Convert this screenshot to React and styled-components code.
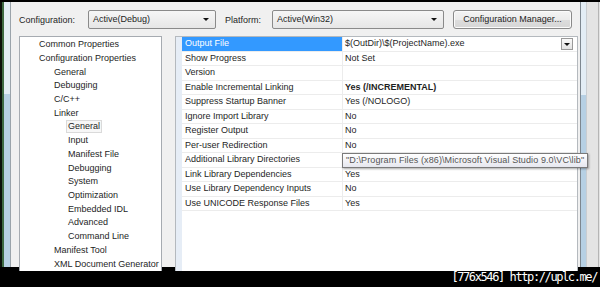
import React from "react";
import styled, { createGlobalStyle } from "styled-components";

const GlobalStyle = createGlobalStyle`
  html, body { margin: 0; padding: 0; background: #000; }
  body { font-family: "Liberation Sans", Arial, sans-serif; }
  * { box-sizing: border-box; }
`;

const Screen = styled.div`
  width: 600px;
  height: 287px;
  overflow: hidden;
  display: flex;
  flex-direction: column;
  background: #000;
`;

const Middle = styled.div`
  display: flex;
  height: 265px;
  margin-top: 2px;
  position: relative;
`;

const LeftEdge = styled.div`
  width: 11px;
  flex-shrink: 0;
  background:
    linear-gradient(to right, #0b110b 0 2px, #3d6a43 2px 4px, transparent 4px 10px, #9aa3aa 10px 11px),
    linear-gradient(to bottom, #e2edf5 0 92px, #b7d1e4 92px);
`;

const RightEdge = styled.div`
  width: 20px;
  flex-shrink: 0;
  background:
    linear-gradient(to right, #7d8790 0 1px, transparent 1px 6px, #c9cdd1 6px 7px, #e4e4e4 7px 18px, #b5b5b5 18px 19px, #e4e4e4 19px),
    linear-gradient(to bottom, #e3edf5 0 93px, #b6d0e4 93px);
`;

const Dialog = styled.div`
  flex: 1;
  background: #f0f0f0;
  padding: 8px 2px 0 8px;
  display: flex;
  flex-direction: column;
  gap: 7px;
  color: #1e1e1e;
  font-size: 9px;
`;

const Toolbar = styled.div`
  display: flex;
  align-items: center;
  height: 19px;
`;

const Label = styled.span`
  width: ${(p) => p.$w}px;
  margin-left: ${(p) => p.$ml || 0}px;
  flex-shrink: 0;
  white-space: nowrap;
`;

const Select = styled.div`
  position: relative;
  width: ${(p) => p.$w}px;
  height: 19px;
  flex-shrink: 0;
  border: 1px solid #8a8a8a;
  border-radius: 2px;
  background: linear-gradient(#f6f6f6, #e6e6e6);
  padding-left: 4px;
  line-height: 16px;
  &::after {
    content: "";
    position: absolute;
    right: 6px;
    top: 7px;
    border-left: 3px solid transparent;
    border-right: 3px solid transparent;
    border-top: 3px solid #111;
  }
`;

const Button = styled.div`
  width: 119px;
  height: 19px;
  margin-left: 9px;
  flex-shrink: 0;
  border: 1px solid #8a8a8a;
  border-radius: 3px;
  background: linear-gradient(#f4f4f4 0%, #ebebeb 50%, #dddddd 51%, #d6d6d6 100%);
  box-shadow: inset 0 0 0 1px #fbfbfb;
  text-align: center;
  line-height: 17px;
`;

const Content = styled.div`
  flex: 1;
  display: flex;
  gap: 13px;
`;

const Tree = styled.div`
  width: 143px;
  flex-shrink: 0;
  background: #fff;
  border: 1px solid #a6abb1;
  border-bottom: none;
  padding-top: 1px;
`;

const TreeRow = styled.div`
  height: 13.73px;
  line-height: 13.73px;
  padding-left: ${(p) => [17, 32, 46][p.$level]}px;
  white-space: nowrap;
`;

const TreeText = styled.span`
  display: inline-block;
  height: 13px;
  line-height: 11px;
  padding: 0 1px;
  border: 1px solid ${(p) => (p.$sel ? "#dadada" : "transparent")};
  background: ${(p) => (p.$sel ? "#f7f7f7" : "transparent")};
  vertical-align: middle;
`;

const Grid = styled.div`
  position: relative;
  flex: 1;
  display: flex;
  background: #fff;
  border: 1px solid #b4b9be;
  border-bottom: none;
`;

const Gutter = styled.div`
  width: 6px;
  flex-shrink: 0;
  background: #e6edf6;
`;

const Rows = styled.div`
  flex: 1;
  display: flex;
  flex-direction: column;
`;

const PropRow = styled.div`
  display: grid;
  grid-template-columns: 161px 1fr;
  height: 14.5px;
  border-bottom: 1px solid #ececec;
  line-height: 13.5px;
`;

const NameCell = styled.div`
  padding-left: 3px;
  border-right: 1px solid #ececec;
  white-space: nowrap;
  background: ${(p) => (p.$sel ? "#3399ff" : "transparent")};
  color: ${(p) => (p.$sel ? "#fff" : "#1e1e1e")};
`;

const ValueCell = styled.div`
  display: flex;
  align-items: center;
  padding-left: 2px;
  white-space: nowrap;
  font-weight: ${(p) => (p.$bold ? "bold" : "normal")};
`;

const DropBtn = styled.div`
  position: relative;
  margin-left: auto;
  margin-right: 4px;
  width: 12px;
  height: 12px;
  border: 1px solid #9a9a9a;
  background: linear-gradient(#fafafa, #e2e2e2);
  &::after {
    content: "";
    position: absolute;
    left: 2px;
    top: 4px;
    border-left: 3px solid transparent;
    border-right: 3px solid transparent;
    border-top: 3px solid #111;
  }
`;

const Tooltip = styled.div`
  position: absolute;
  left: 166px;
  top: 116px;
  height: 15px;
  padding: 0 3px;
  border: 1px solid #7a7a7a;
  background: linear-gradient(#ffffff, #e6e7ef);
  box-shadow: 1px 1px 2px rgba(0, 0, 0, 0.35);
  color: #555;
  line-height: 13px;
  letter-spacing: 0.1px;
  white-space: nowrap;
  z-index: 2;
`;

const Footer = styled.div`
  height: 20px;
  display: flex;
  justify-content: flex-end;
  align-items: center;
  padding-right: 3px;
  color: #fff;
  font-family: "DejaVu Sans Mono", "Liberation Mono", monospace;
  font-size: 12px;
  letter-spacing: -1.4px;
`;

const tree = [
  [0, "Common Properties"],
  [0, "Configuration Properties"],
  [1, "General"],
  [1, "Debugging"],
  [1, "C/C++"],
  [1, "Linker"],
  [2, "General", true],
  [2, "Input"],
  [2, "Manifest File"],
  [2, "Debugging"],
  [2, "System"],
  [2, "Optimization"],
  [2, "Embedded IDL"],
  [2, "Advanced"],
  [2, "Command Line"],
  [1, "Manifest Tool"],
  [1, "XML Document Generator"],
];

const props = [
  ["Output File", "$(OutDir)\\$(ProjectName).exe"],
  ["Show Progress", "Not Set"],
  ["Version", ""],
  ["Enable Incremental Linking", "Yes (/INCREMENTAL)", true],
  ["Suppress Startup Banner", "Yes (/NOLOGO)"],
  ["Ignore Import Library", "No"],
  ["Register Output", "No"],
  ["Per-user Redirection", "No"],
  ["Additional Library Directories", ""],
  ["Link Library Dependencies", "Yes"],
  ["Use Library Dependency Inputs", "No"],
  ["Use UNICODE Response Files", "Yes"],
];

export default function App() {
  return (
    <>
      <GlobalStyle />
      <Screen>
        <Middle>
          <LeftEdge />
          <Dialog>
            <Toolbar>
              <Label $w={69}>Configuration:</Label>
              <Select $w={128}>Active(Debug)</Select>
              <Label $w={47} $ml={9}>Platform:</Label>
              <Select $w={172}>Active(Win32)</Select>
              <Button>Configuration Manager...</Button>
            </Toolbar>
            <Content>
              <Tree>
                {tree.map(([level, text, sel], i) => (
                  <TreeRow key={i} $level={level}>
                    <TreeText $sel={sel}>{text}</TreeText>
                  </TreeRow>
                ))}
              </Tree>
              <Grid>
                <Gutter />
                <Rows>
                  {props.map(([name, value, bold], i) => (
                    <PropRow key={name}>
                      <NameCell $sel={i === 0}>{name}</NameCell>
                      <ValueCell $bold={bold}>
                        {value}
                        {i === 0 && <DropBtn />}
                      </ValueCell>
                    </PropRow>
                  ))}
                </Rows>
                <Tooltip>"D:\Program Files (x86)\Microsoft Visual Studio 9.0\VC\lib"</Tooltip>
              </Grid>
            </Content>
          </Dialog>
          <RightEdge />
        </Middle>
        <Footer>[776x546] http://uplc.me/</Footer>
      </Screen>
    </>
  );
}
